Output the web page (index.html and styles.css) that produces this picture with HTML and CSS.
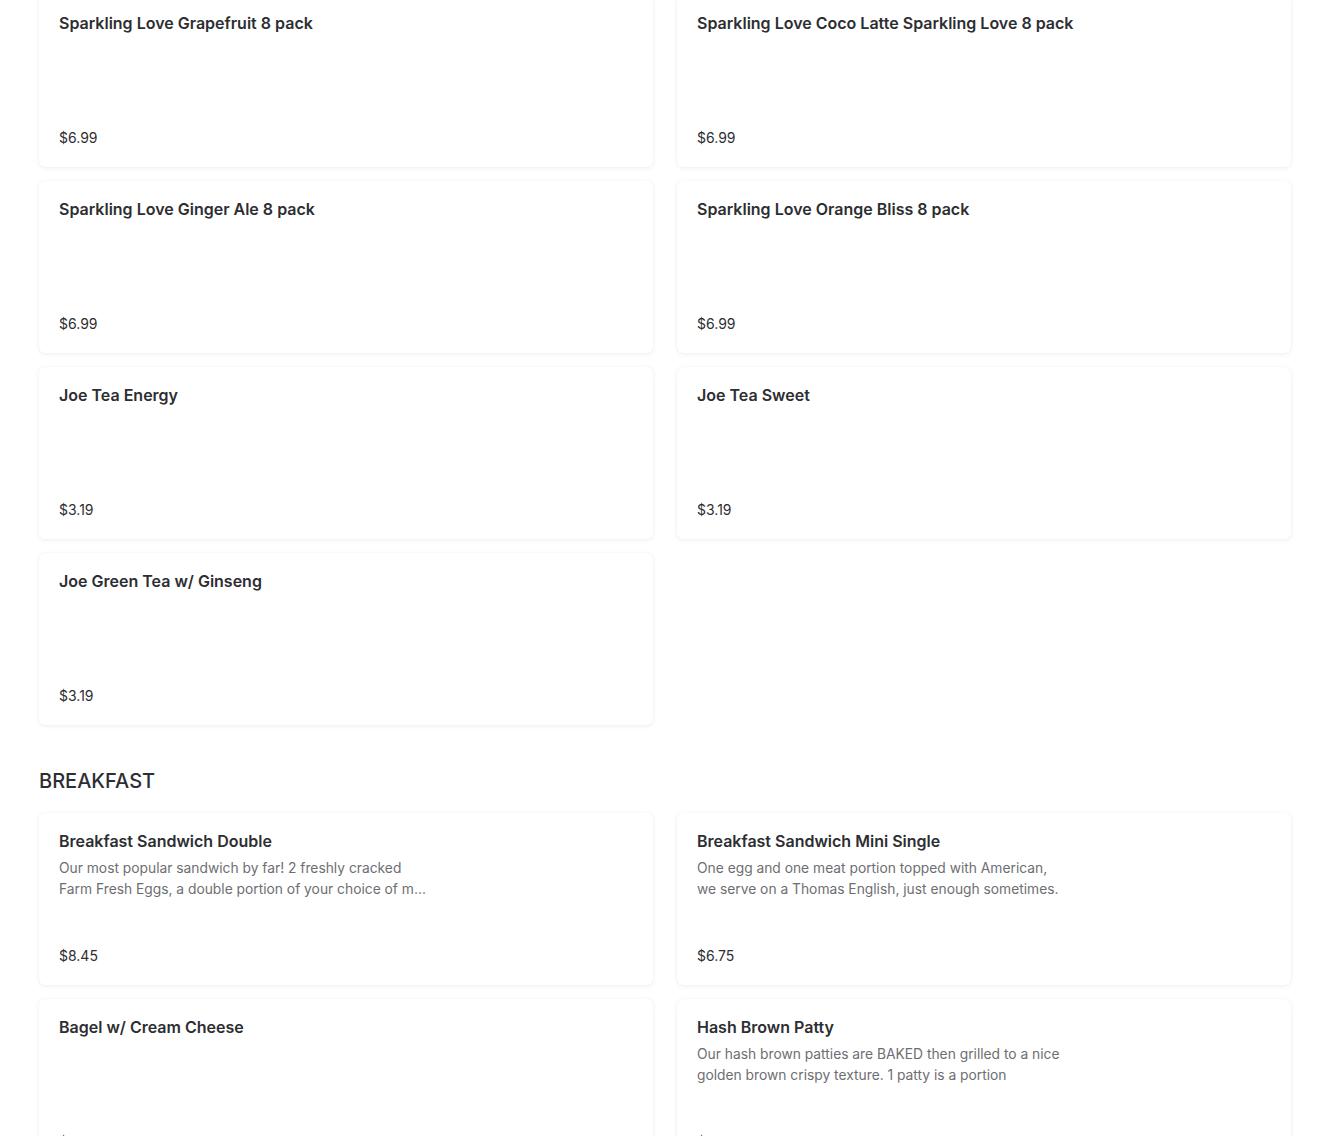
FILE: index.html
```html
<!DOCTYPE html>
<html lang="en">
<head>
<meta charset="utf-8">
<title>Menu</title>
<link rel="stylesheet" href="styles.css">
</head>
<body>
<main class="menu">
  <section class="category">
    <div class="grid">
      <div class="card"><div class="title">Sparkling Love Grapefruit 8 pack</div><div class="price">$6.99</div></div>
      <div class="card"><div class="title">Sparkling Love Coco Latte Sparkling Love 8 pack</div><div class="price">$6.99</div></div>
      <div class="card"><div class="title">Sparkling Love Ginger Ale 8 pack</div><div class="price">$6.99</div></div>
      <div class="card"><div class="title">Sparkling Love Orange Bliss 8 pack</div><div class="price">$6.99</div></div>
      <div class="card"><div class="title">Joe Tea Energy</div><div class="price">$3.19</div></div>
      <div class="card"><div class="title">Joe Tea Sweet</div><div class="price">$3.19</div></div>
      <div class="card"><div class="title">Joe Green Tea w/ Ginseng</div><div class="price">$3.19</div></div>
    </div>
  </section>
  <section class="category">
    <h2 class="cat-title">BREAKFAST</h2>
    <div class="grid">
      <div class="card"><div class="title">Breakfast Sandwich Double</div><div class="desc">Our most popular sandwich by far! 2 freshly cracked Farm Fresh Eggs, a double portion of your choice of m…</div><div class="price">$8.45</div></div>
      <div class="card"><div class="title">Breakfast Sandwich Mini Single</div><div class="desc">One egg and one meat portion topped with American, we serve on a Thomas English, just enough sometimes.</div><div class="price">$6.75</div></div>
      <div class="card"><div class="title">Bagel w/ Cream Cheese</div><div class="price">$3.25</div></div>
      <div class="card"><div class="title">Hash Brown Patty</div><div class="desc">Our hash brown patties are BAKED then grilled to a nice golden brown crispy texture. 1 patty is a portion</div><div class="price">$1.99</div></div>
    </div>
  </section>
</main>
</body>
</html>
```

FILE: styles.css
```css
* { box-sizing: border-box; }
html, body { margin: 0; padding: 0; background: #ffffff; }
body {
  font-family: "Inter", "Liberation Sans", sans-serif;
  color: #2d2e32;
  overflow: hidden;
}
.menu {
  padding: 0 39px;
  margin-top: -5px;
}
.grid {
  display: grid;
  grid-template-columns: 1fr 1fr;
  column-gap: 24px;
  row-gap: 14px;
}
.card {
  height: 172px;
  background: #fff;
  border-radius: 6px;
  box-shadow: 0 1px 5px rgba(0, 0, 0, 0.07), 0 0 1px rgba(0,0,0,0.05);
  padding: 17px 20px 19px;
  display: flex;
  flex-direction: column;
}
.title {
  font-size: 16px;
  font-weight: 600;
  line-height: 22px;
  color: #2d2e32;
}
.desc {
  margin-top: 6px;
  max-width: 369px;
  font-size: 13.8px;
  line-height: 21px;
  color: #6e6e72;
  display: -webkit-box;
  -webkit-line-clamp: 2;
  -webkit-box-orient: vertical;
  overflow: hidden;
}
.price {
  margin-top: auto;
  font-size: 14px;
  line-height: 20px;
  color: #2d2e32;
}
.cat-title {
  margin: 43px 0 19px;
  font-size: 20px;
  font-weight: 500;
  line-height: 26px;
  color: #2d2e32;
}
```
